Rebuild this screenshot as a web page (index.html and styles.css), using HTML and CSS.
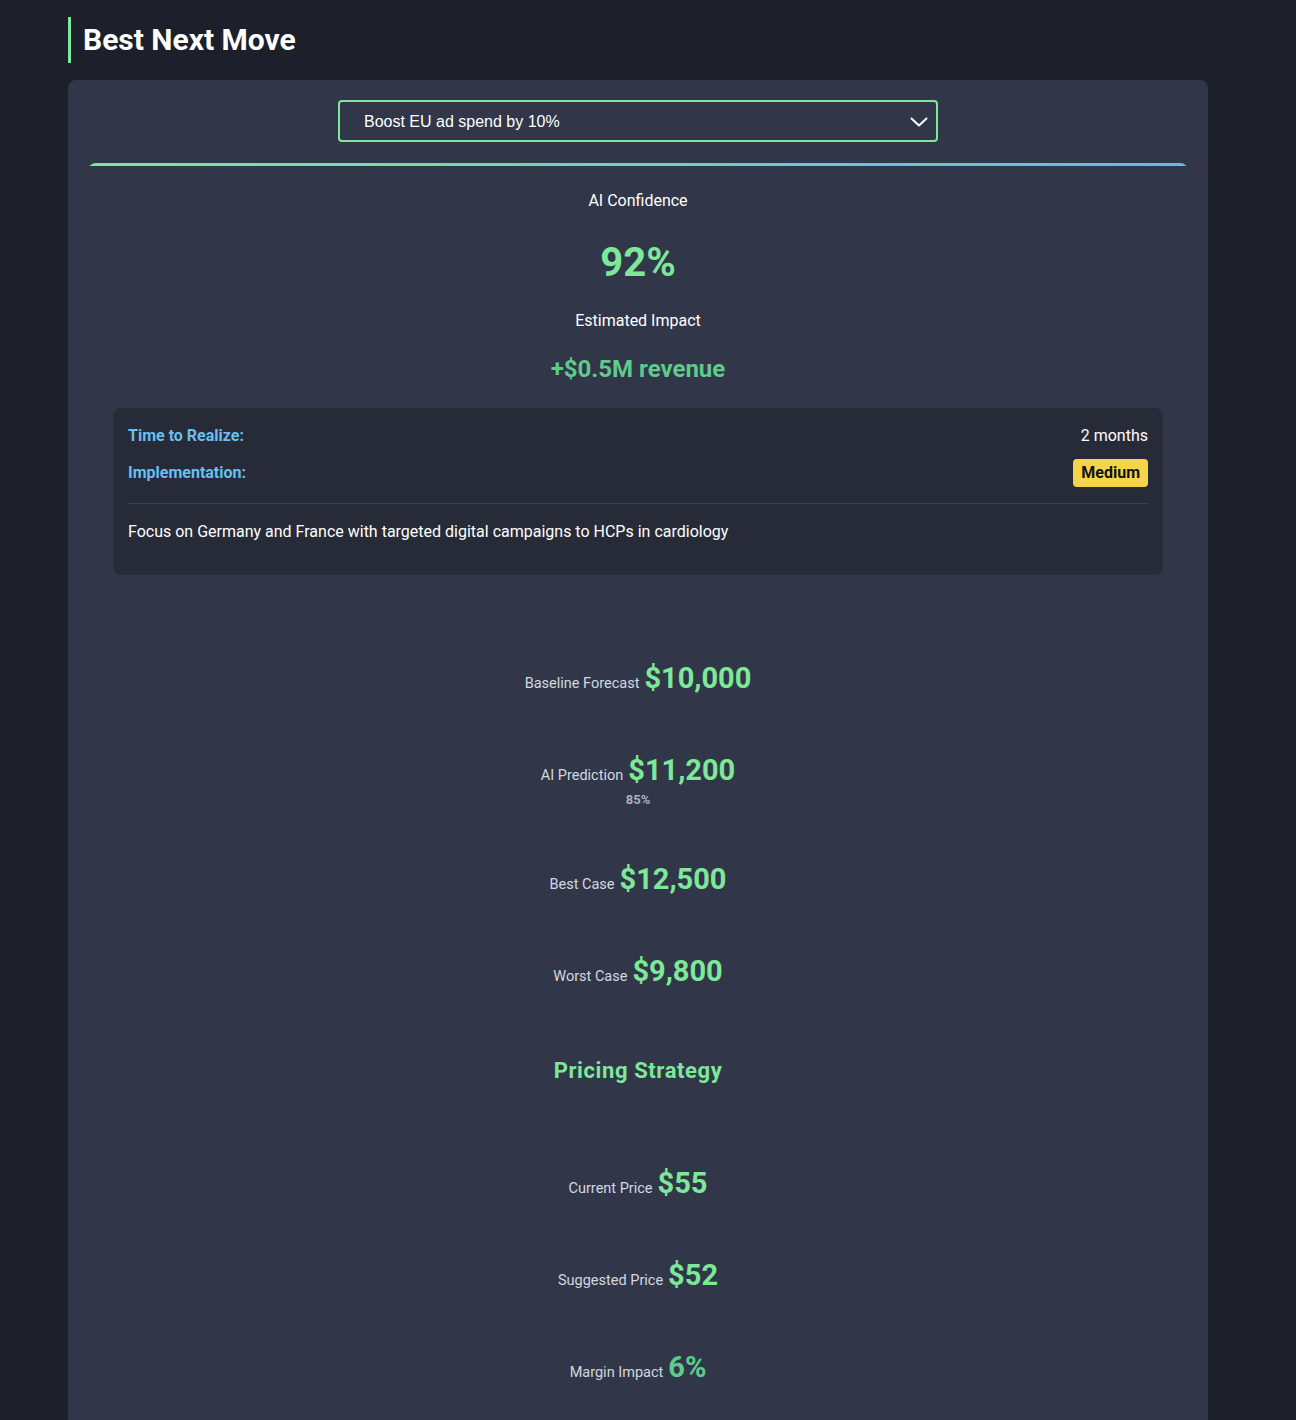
FILE: index.html
```html
<!DOCTYPE html>
<html>
<head>
<meta charset="utf-8">
<link rel="stylesheet" href="styles.css">
</head>
<body>
<div class="page">
  <h2 class="title">Best Next Move</h2>
  <div class="card">
    <div class="select-wrap">
      <div class="select">
        <span>Boost EU ad spend by 10%</span>
        <svg class="chev" width="18" height="12" viewBox="0 0 18 12"><path d="M1.5 2.5 L9 9.5 L16.5 2.5" fill="none" stroke="#ffffff" stroke-width="2" stroke-linecap="round" stroke-linejoin="round"/></svg>
      </div>
    </div>
    <div class="move">
      <div class="stat-label">AI Confidence</div>
      <div class="confidence">92%</div>
      <div class="stat-label impact-label">Estimated Impact</div>
      <div class="impact">+$0.5M revenue</div>
      <div class="details">
        <div class="drow">
          <span class="dkey">Time to Realize:</span>
          <span class="dval">2 months</span>
        </div>
        <div class="drow drow2">
          <span class="dkey">Implementation:</span>
          <span class="badge">Medium</span>
        </div>
        <div class="divider"></div>
        <p class="desc">Focus on Germany and France with targeted digital campaigns to HCPs in cardiology</p>
      </div>

      <div class="metrics">
        <div class="metric">
          <div class="mline"><span class="mlabel">Baseline Forecast</span><span class="mvalue">$10,000</span></div>
        </div>
        <div class="metric">
          <div class="mline"><span class="mlabel">AI Prediction</span><span class="mvalue">$11,200</span></div>
          <div class="msub">85%</div>
        </div>
        <div class="metric">
          <div class="mline"><span class="mlabel">Best Case</span><span class="mvalue">$12,500</span></div>
        </div>
        <div class="metric">
          <div class="mline"><span class="mlabel">Worst Case</span><span class="mvalue">$9,800</span></div>
        </div>
      </div>

      <h3 class="section">Pricing Strategy</h3>

      <div class="metrics metrics2">
        <div class="metric">
          <div class="mline"><span class="mlabel">Current Price</span><span class="mvalue">$55</span></div>
        </div>
        <div class="metric">
          <div class="mline"><span class="mlabel">Suggested Price</span><span class="mvalue">$52</span></div>
        </div>
        <div class="metric">
          <div class="mline"><span class="mlabel">Margin Impact</span><span class="mvalue dim">6%</span></div>
        </div>
      </div>
    </div>
  </div>
</div>
</body>
</html>
```

FILE: styles.css
```css
* { box-sizing: border-box; }
html, body {
  margin: 0;
  padding: 0;
  background: #1d202a;
  font-family: Roboto, "Liberation Sans", sans-serif;
  color: #ffffff;
}
.page {
  padding: 17px 0 0 68px;
  width: 1208px;
}
.title {
  margin: 0 0 17px 0;
  border-left: 3px solid #7de898;
  padding-left: 12px;
  font-size: 30px;
  font-weight: 700;
  line-height: 46px;
  height: 46px;
  color: #ffffff;
}
.card {
  width: 1140px;
  background: #313748;
  border-radius: 8px;
  padding: 20px 20px 40px 20px;
}
.select-wrap {
  display: flex;
  justify-content: center;
}
.select {
  width: 600px;
  height: 42px;
  border: 2px solid #7de898;
  border-radius: 4px;
  display: flex;
  align-items: center;
  justify-content: space-between;
  padding: 1px 8px 0 24px;
  font-family: "Liberation Sans", Arial, sans-serif;
  font-size: 16px;
  color: #ffffff;
  background: #313748;
}
.chev { display: block; }
.move {
  margin-top: 21px;
  border-radius: 8px;
  background: linear-gradient(90deg, #7de898, #63b9ec) top / 100% 3px no-repeat, #313748;
  padding: 28px 25px 0 25px;
  text-align: center;
}
.stat-label {
  font-size: 16px;
  line-height: 20px;
  color: #ffffff;
}
.confidence {
  margin-top: 28px;
  font-size: 40px;
  font-weight: 700;
  line-height: 48px;
  color: #7de898;
}
.impact-label { margin-top: 24px; }
.impact {
  margin-top: 23px;
  font-size: 24px;
  font-weight: 700;
  line-height: 30px;
  color: #5fca8c;
}
.details {
  margin-top: 24px;
  background: #272b38;
  border-radius: 8px;
  padding: 16px 15px 31px 15px;
  text-align: left;
}
.drow {
  display: flex;
  justify-content: space-between;
  align-items: center;
  line-height: 24px;
  font-size: 16px;
}
.drow2 { margin-top: 11px; min-height: 28px; }
.dkey {
  color: #68bff0;
  font-weight: 700;
}
.dval { color: #ffffff; }
.badge {
  background: #f5d547;
  color: #111111;
  font-weight: 700;
  border-radius: 4px;
  padding: 2px 8px;
  line-height: 24px;
  font-size: 16px;
}
.divider {
  margin-top: 16px;
  height: 1px;
  background: #3c4252;
}
.desc {
  margin: 16px 0 0 0;
  font-size: 16px;
  line-height: 24px;
  color: #ffffff;
}
.metrics { margin-top: 57px; }
.metric { padding: 28px 0; }
.mline {
  display: flex;
  justify-content: center;
  align-items: baseline;
  gap: 5px;
  height: 36px;
  line-height: 36px;
  overflow: visible;
}
.mlabel {
  font-size: 14.5px;
  font-weight: 400;
  color: #d3d8e0;
}
.mvalue {
  font-size: 29px;
  font-weight: 700;
  color: #7de898;
}
.mvalue.dim { color: #5fca8c; }
.msub {
  font-size: 13px;
  font-weight: 700;
  line-height: 15px;
  color: #a8b0bd;
  margin-top: 4px;
  margin-bottom: -2px;
}
.section {
  margin: 40px 0 0 0;
  font-size: 22px;
  line-height: 28px;
  font-weight: 700;
  letter-spacing: 0.6px;
  color: #7de898;
}
.metrics2 { margin-top: 52px; }
```
